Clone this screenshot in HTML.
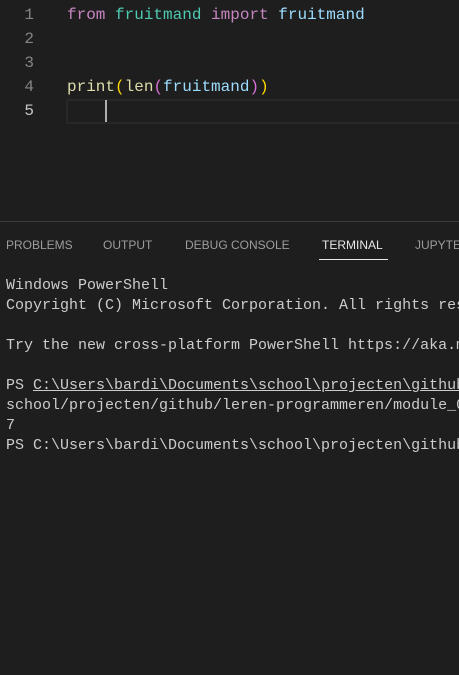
<!DOCTYPE html>
<html><head><style>
html,body{margin:0;width:459px;height:675px;overflow:hidden}
body{background:#1e1e1e;position:relative;font-family:"Liberation Mono",monospace}
#w{position:absolute;left:0;top:0;width:459px;height:675px;overflow:hidden}
.ln{position:absolute;left:0;width:34px;text-align:right;color:#858585;font-size:16px;line-height:24px}
.code{position:absolute;left:67px;font-size:16px;line-height:24px;white-space:pre;color:#d4d4d4}
.k{color:#c586c0}.m{color:#4ec9b0}.v{color:#9cdcfe}.f{color:#dcdcaa}.y{color:#ffd700}.p{color:#da70d6}
.t{position:absolute;left:6px;font-size:15px;line-height:20px;white-space:pre;color:#cccccc}
.tab{position:absolute;top:237px;font-family:"Liberation Sans",sans-serif;font-size:12px;color:#9d9d9d;line-height:16px;white-space:pre}
</style></head><body><div id="w">
<div class="ln" style="top:3px">1</div>
<div class="ln" style="top:27px">2</div>
<div class="ln" style="top:51px">3</div>
<div class="ln" style="top:75px">4</div>
<div class="ln" style="top:99px;color:#c6c6c6">5</div>
<div class="code" style="top:3px"><span class="k">from</span> <span class="m">fruitmand</span> <span class="k">import</span> <span class="v">fruitmand</span></div>
<div class="code" style="top:75px"><span class="f">print</span><span class="y">(</span><span class="f">len</span><span class="p">(</span><span class="v">fruitmand</span><span class="p">)</span><span class="y">)</span></div>
<div style="position:absolute;left:66px;top:99px;width:400px;height:21px;border:2px solid #282828"></div>
<div style="position:absolute;left:105px;top:100px;width:2px;height:22px;background:#aeafad"></div>
<div style="position:absolute;left:0;top:221px;width:459px;height:1px;background:#3c3c3c"></div>
<div class="tab" style="left:6px">PROBLEMS</div>
<div class="tab" style="left:103px">OUTPUT</div>
<div class="tab" style="left:185px">DEBUG CONSOLE</div>
<div class="tab" style="left:322px;color:#e7e7e7">TERMINAL</div>
<div class="tab" style="left:415px">JUPYTER</div>
<div style="position:absolute;left:319px;top:259px;width:69px;height:1px;background:#e7e7e7"></div>
<div class="t" style="top:276px">Windows PowerShell</div>
<div class="t" style="top:296px">Copyright (C) Microsoft Corporation. All rights reserved.</div>
<div class="t" style="top:336px">Try the new cross-platform PowerShell https://aka.ms/pscore6</div>
<div class="t" style="top:376px">PS <u>C:\Users\bardi\Documents\school\projecten\github</u></div>
<div class="t" style="top:396px">school/projecten/github/leren-programmeren/module_02</div>
<div class="t" style="top:416px">7</div>
<div class="t" style="top:436px">PS C:\Users\bardi\Documents\school\projecten\github</div>
</div></body></html>
